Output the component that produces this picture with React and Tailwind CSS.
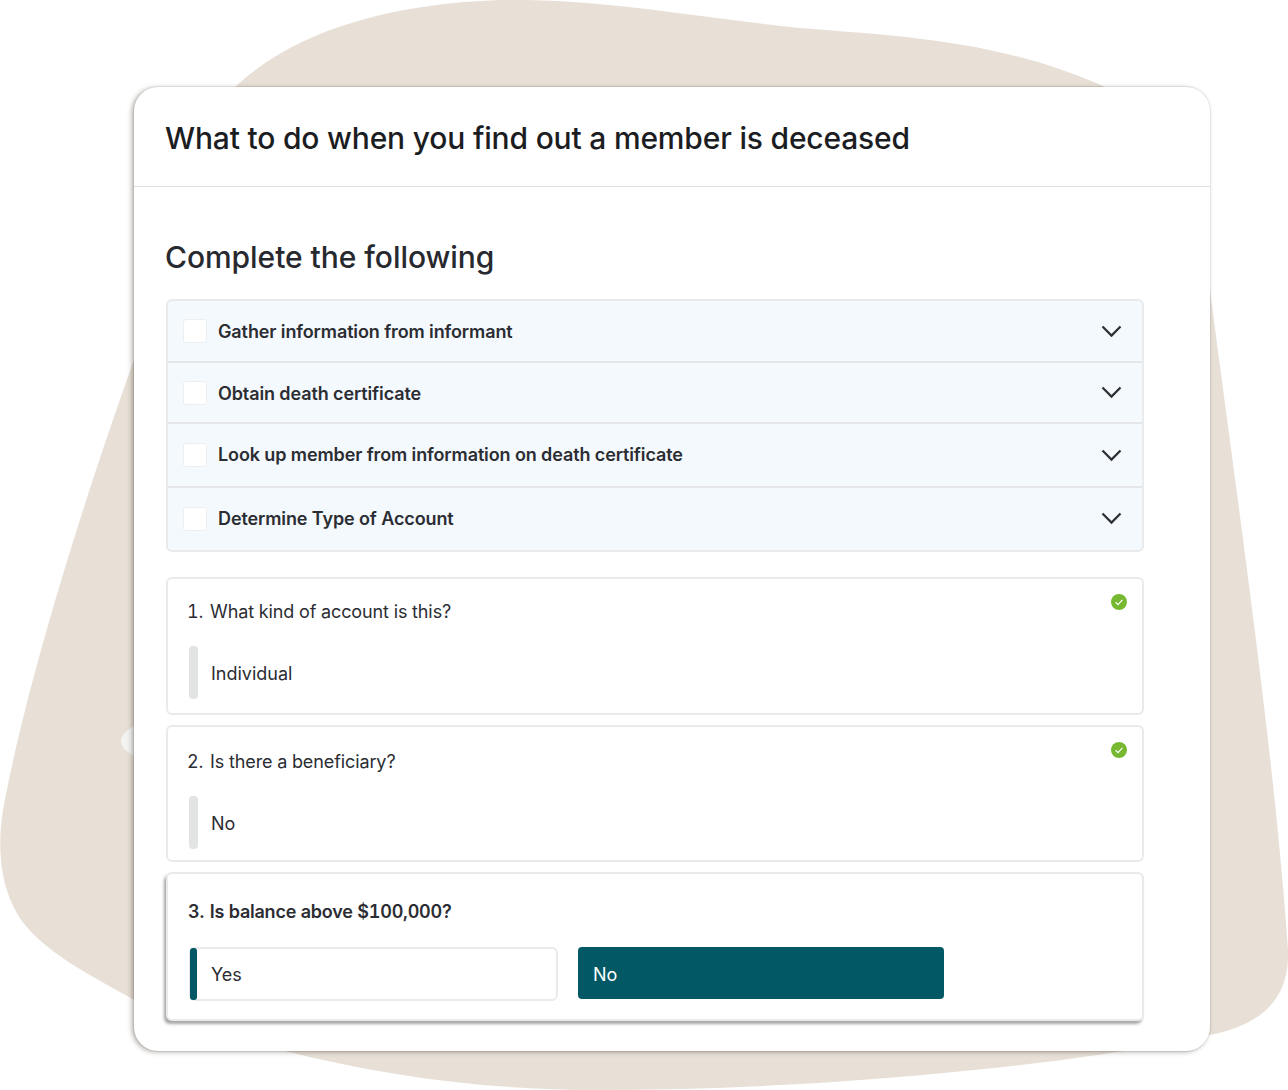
const tasks = [
  { label: 'Gather information from informant', row: 'h-[60px]', text: '' },
  { label: 'Obtain death certificate', row: 'h-[61px]', text: 'pt-[2px]' },
  { label: 'Look up member from information on death certificate', row: 'h-[64px]', text: 'pb-px' },
  { label: 'Determine Type of Account', row: 'h-[64px] pb-px', text: '' },
]

function Blob() {
  return (
    <svg className="absolute left-0 top-0" width="1288" height="1090" viewBox="0 0 1288 1090">
      <path
        fill="#e8e0d7"
        d="M235 87 C290 35 380 4 500 0 C600 -2 700 18 800 28 C900 36 1000 40 1105 87 L1210 290 C1240 520 1275 760 1288 950 C1290 1000 1260 1025 1210 1035 C1100 1060 850 1090 600 1090 C480 1090 380 1075 285 1051 L134 1000 C90 975 50 955 25 925 C5 900 -5 860 3 810 C25 690 80 510 134 360 Z"
      />
      <path fill="#f3f4f2" d="M136 724 C128 730 121 734 121 741 C121 748 128 752 136 758 Z" />
    </svg>
  )
}

function Check() {
  return (
    <svg className="absolute right-[15px] top-[15px]" width="16" height="16" viewBox="0 0 16 16">
      <circle cx="8" cy="8" r="8" fill="#76b82f" />
      <path d="M4.6 8.3 L7 10.6 L11.4 5.8" fill="none" stroke="#fff" strokeWidth="1.2" />
    </svg>
  )
}

function Chevron() {
  return (
    <svg width="21" height="13" viewBox="0 0 21 13" className="shrink-0">
      <path d="M1.5 1.5 L10.5 10.5 L19.5 1.5" fill="none" stroke="#2f3135" strokeWidth="2.3" />
    </svg>
  )
}

function AnsweredQuestion({ num, title, answer, className }) {
  return (
    <div className={`relative rounded-md border-2 border-[#e9eaec] bg-white pl-[20px] ${className}`}>
      <Check />
      <p className="-ml-px text-[18px] leading-[26px] tracking-[-0.1px] text-[#2b2d33] tabular-nums">
        <span className="mr-[2px]">{num}</span> {title}
      </p>
      <div className="mt-[21px] flex items-center">
        <span className="ml-px h-[53px] w-[9px] rounded-[4px] bg-[#e2e3e3]" />
        <span className="ml-[13px] pt-[3px] text-[18px] leading-[26px] text-[#2b2d33]">{answer}</span>
      </div>
    </div>
  )
}

export default function App() {
  return (
    <div className="relative h-[1090px] w-[1288px] overflow-hidden bg-white font-['Inter',sans-serif]">
      <Blob />
      <div className="relative ml-[134px] h-[964px] w-[1076px] translate-y-[87px] rounded-[24px] bg-white shadow-[-2px_1px_5px_rgba(60,50,40,0.4),0_0_0_1px_rgba(0,0,0,0.06)]">
        <header className="flex h-[100px] items-center border-b border-[#dfe0e2] pl-[31px] pt-[3px]">
          <h1 className="text-[30px] font-medium leading-[40px] tracking-[-0.18px] text-[#1b1d22]">What to do when you find out a member is deceased</h1>
        </header>
        <div className="pl-[32px] pr-[66px]">
          <h2 className="-ml-px mt-[50px] text-[30px] font-medium leading-[40px] tracking-[-0.05px] text-[#27292e]">Complete the following</h2>
          <div className="mt-[22px] overflow-hidden rounded-md border-2 border-[#e9eaec] bg-[#f4f9fd]">
            {tasks.map((t, i) => (
              <div key={t.label} className={`flex items-center pl-[15px] pr-[20px] ${t.row} ${i ? 'border-t-2 border-[#e4e6e9]' : ''}`}>
                <span className="h-[24px] w-[24px] rounded-[3px] border border-[#eceef0] bg-white" />
                <span className={`ml-[11px] flex-1 text-[18px] font-semibold tracking-[-0.11px] text-[#2b2d33] ${t.text}`}>{t.label}</span>
                <Chevron />
              </div>
            ))}
          </div>
          <AnsweredQuestion className="mt-[25px] h-[138px] pt-[20px]" num="1." title="What kind of account is this?" answer="Individual" />
          <AnsweredQuestion className="mt-[10px] h-[137px] pt-[22px]" num="2." title="Is there a beneficiary?" answer="No" />
          <div className="mt-[10px] h-[149px] rounded-md border-2 border-[#e9eaec] bg-white pl-[20px] pt-[25px] shadow-[-2px_3px_3px_rgba(60,60,60,0.45)]">
            <p className="text-[18px] font-semibold leading-[26px] tracking-[-0.22px] text-[#2b2d33] tabular-nums">
              <span className="mr-px">3.</span> Is balance above $100,000?
            </p>
            <div className="mt-[22px] flex gap-[20px]">
              <div className="ml-px flex h-[54px] w-[369px] items-center rounded-md border-2 border-[#e9eaec] bg-white">
                <span className="-ml-px h-[52px] w-[7px] rounded-[3px] bg-[#025864]" />
                <span className="ml-[14px] text-[18px] text-[#2b2d33]">Yes</span>
              </div>
              <div className="flex h-[52px] w-[366px] items-center rounded-[4px] bg-[#025864] pl-[15px] pt-[2px] text-[18px] text-white">No</div>
            </div>
          </div>
        </div>
      </div>
    </div>
  )
}
